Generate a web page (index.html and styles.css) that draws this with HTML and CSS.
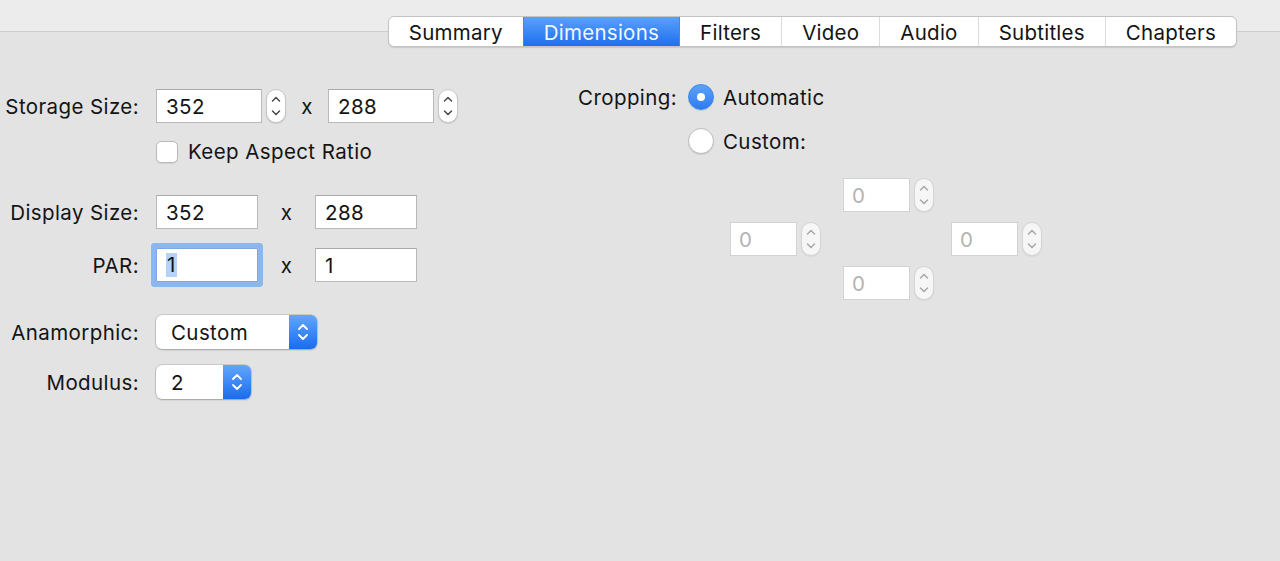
FILE: index.html
```html
<!DOCTYPE html>
<html>
<head>
<meta charset="utf-8">
<link rel="stylesheet" href="styles.css">
</head>
<body>
<div class="window">
  <header class="toolbar">
    <nav class="tabs">
      <div class="tab">Summary</div>
      <div class="tab active">Dimensions</div>
      <div class="tab">Filters</div>
      <div class="tab">Video</div>
      <div class="tab">Audio</div>
      <div class="tab">Subtitles</div>
      <div class="tab">Chapters</div>
    </nav>
  </header>

  <main class="content">
    <section class="left">
      <div class="row row-storage">
        <div class="lbl">Storage Size:</div>
        <div class="ctrls">
          <div class="field w106">352</div>
          <div class="stepper">
            <svg width="20" height="34" viewBox="0 0 20 34"><path d="M6.5 12 L10 8.5 L13.5 12" /><path d="M6.5 22 L10 25.5 L13.5 22" /></svg>
          </div>
          <div class="times t42">x</div>
          <div class="field w106">288</div>
          <div class="stepper">
            <svg width="20" height="34" viewBox="0 0 20 34"><path d="M6.5 12 L10 8.5 L13.5 12" /><path d="M6.5 22 L10 25.5 L13.5 22" /></svg>
          </div>
        </div>
      </div>

      <div class="row row-check">
        <div class="lbl"></div>
        <div class="ctrls">
          <div class="checkbox"></div>
          <span class="check-label">Keep Aspect Ratio</span>
        </div>
      </div>

      <div class="row row-display">
        <div class="lbl">Display Size:</div>
        <div class="ctrls">
          <div class="field w102">352</div>
          <div class="times t57">x</div>
          <div class="field w102">288</div>
        </div>
      </div>

      <div class="row row-par">
        <div class="lbl">PAR:</div>
        <div class="ctrls">
          <div class="field w102 focused"><span class="sel">1</span></div>
          <div class="times t57">x</div>
          <div class="field w102">1</div>
        </div>
      </div>

      <div class="row row-anam">
        <div class="lbl">Anamorphic:</div>
        <div class="ctrls">
          <div class="popup w161">
            <span class="popup-text">Custom</span>
            <span class="popup-btn">
              <svg width="28" height="34" viewBox="0 0 28 34"><path d="M10 14 L14 10 L18 14" /><path d="M10 20 L14 24 L18 20" /></svg>
            </span>
          </div>
        </div>
      </div>

      <div class="row row-mod">
        <div class="lbl">Modulus:</div>
        <div class="ctrls">
          <div class="popup w95">
            <span class="popup-text">2</span>
            <span class="popup-btn">
              <svg width="28" height="34" viewBox="0 0 28 34"><path d="M10 14 L14 10 L18 14" /><path d="M10 20 L14 24 L18 20" /></svg>
            </span>
          </div>
        </div>
      </div>
    </section>

    <section class="right">
      <div class="crop-row">
        <div class="lbl crop-lbl">Cropping:</div>
        <div class="radio on"></div>
        <span class="radio-label">Automatic</span>
      </div>
      <div class="crop-row second">
        <div class="lbl crop-lbl"></div>
        <div class="radio"></div>
        <span class="radio-label">Custom:</span>
      </div>
      <div class="crop-grid">
        <div class="cell c-top">
          <div class="field dis">0</div>
          <div class="stepper dis"><svg width="20" height="34" viewBox="0 0 20 34"><path d="M6.5 12 L10 8.5 L13.5 12" /><path d="M6.5 22 L10 25.5 L13.5 22" /></svg></div>
        </div>
        <div class="cell c-left">
          <div class="field dis">0</div>
          <div class="stepper dis"><svg width="20" height="34" viewBox="0 0 20 34"><path d="M6.5 12 L10 8.5 L13.5 12" /><path d="M6.5 22 L10 25.5 L13.5 22" /></svg></div>
        </div>
        <div class="cell c-right">
          <div class="field dis">0</div>
          <div class="stepper dis"><svg width="20" height="34" viewBox="0 0 20 34"><path d="M6.5 12 L10 8.5 L13.5 12" /><path d="M6.5 22 L10 25.5 L13.5 22" /></svg></div>
        </div>
        <div class="cell c-bottom">
          <div class="field dis">0</div>
          <div class="stepper dis"><svg width="20" height="34" viewBox="0 0 20 34"><path d="M6.5 12 L10 8.5 L13.5 12" /><path d="M6.5 22 L10 25.5 L13.5 22" /></svg></div>
        </div>
      </div>
    </section>
  </main>
</div>
</body>
</html>
```

FILE: styles.css
```css
* { box-sizing: border-box; }

html, body {
  margin: 0;
  padding: 0;
  height: 100%;
}

body {
  background: #e3e3e3;
  font-family: "Inter", "Liberation Sans", sans-serif;
  font-size: 20.5px;
  letter-spacing: 0.4px;
  color: #141414;
  overflow: hidden;
}

.window {
  width: 1280px;
  height: 561px;
}

/* ---------- tab bar ---------- */
.toolbar {
  height: 47px;
  display: flex;
  justify-content: flex-end;
  padding-right: 43px;
  background: linear-gradient(to bottom, #ececec 0, #ececec 31px, #cdcdcd 31px, #cdcdcd 32px, #e3e3e3 32px);
}

.tabs {
  margin-top: 16px;
  height: 31px;
  display: flex;
  background: #ffffff;
  border: 1px solid #c3c3c3;
  border-radius: 6px;
  box-shadow: 0 1px 1px rgba(0, 0, 0, 0.12);
  overflow: hidden;
}

.tab {
  height: 100%;
  display: flex;
  align-items: center;
  justify-content: center;
  padding: 1px 20px 0;
  border-left: 1px solid #dcdcdc;
  color: #141414;
  letter-spacing: 0.25px;
}

.tab:first-child { border-left: none; }

.tab.active {
  background: linear-gradient(to bottom, #5ba1f9, #1c6ff1);
  color: #f2f7ff;
  border-left-color: #3d87f3;
}

.tab.active + .tab { border-left-color: #3d87f3; }

/* ---------- content ---------- */
.content {
  display: flex;
  align-items: flex-start;
}

.left {
  width: 560px;
  padding-top: 42px;
  display: flex;
  flex-direction: column;
}

.row {
  display: flex;
  align-items: center;
}

.row-check   { margin-top: 16px; }
.row-display { margin-top: 31px; }
.row-par     { margin-top: 19px; }
.row-anam    { margin-top: 33px; }
.row-mod     { margin-top: 16px; }

.lbl {
  width: 140px;
  text-align: right;
  padding-right: 1px;
  flex-shrink: 0;
}

.ctrls {
  margin-left: 16px;
  display: flex;
  align-items: center;
}

.field {
  height: 34px;
  background: #ffffff;
  border: 1px solid #b9b9b9;
  border-top-color: #a9a9a9;
  padding-left: 9px;
  display: flex;
  align-items: center;
  color: #141414;
}

.w106 { width: 106px; }
.w102 { width: 102px; }

.field.focused {
  border-color: #7aa8e4;
  box-shadow: 0 0 0 5px #8cb7ec;
  border-radius: 1px;
}

.sel {
  background: #b4d3f8;
  padding: 0 1px;
  line-height: 24px;
}

.stepper {
  margin-left: 4px;
  width: 20px;
  height: 34px;
  background: #ffffff;
  border: 1px solid #c6c6c6;
  border-radius: 10px;
  box-shadow: 0 1px 1px rgba(0, 0, 0, 0.12);
  display: flex;
  align-items: center;
  justify-content: center;
}

.stepper svg {
  display: block;
  margin: -1px;
}

.stepper path {
  fill: none;
  stroke: #4a4a4a;
  stroke-width: 1.5;
  stroke-linecap: round;
  stroke-linejoin: round;
}

.times {
  text-align: center;
}

.t42 { width: 42px; }
.t57 { width: 57px; }

.checkbox {
  width: 22px;
  height: 22px;
  background: #ffffff;
  border: 1px solid #b9b9b9;
  border-radius: 5px;
  box-shadow: 0 1px 1px rgba(0, 0, 0, 0.08);
}

.check-label {
  margin-left: 10px;
}

.popup {
  height: 34px;
  display: flex;
  align-items: stretch;
  background: #ffffff;
  border-radius: 6px;
  box-shadow: 0 0 0 0.5px rgba(0, 0, 0, 0.22), 0 1px 2px rgba(0, 0, 0, 0.2);
  overflow: hidden;
}

.w161 { width: 161px; }
.w95  { width: 95px; }

.popup-text {
  flex: 1;
  padding-left: 15px;
  display: flex;
  align-items: center;
}

.popup-btn {
  width: 28px;
  background: linear-gradient(to bottom, #62a6fa, #1a6cf0);
  display: flex;
  align-items: center;
  justify-content: center;
}

.popup-btn svg { display: block; }

.popup-btn path {
  fill: none;
  stroke: #ffffff;
  stroke-width: 1.8;
  stroke-linecap: round;
  stroke-linejoin: round;
}

/* ---------- cropping ---------- */
.right {
  padding-top: 37px;
  display: flex;
  flex-direction: column;
}

.crop-row {
  display: flex;
  align-items: center;
  height: 26px;
}

.crop-row.second { margin-top: 18px; }

.crop-lbl {
  width: 117px;
  padding-right: 0;
}

.radio {
  margin-left: 11px;
  width: 26px;
  height: 26px;
  border-radius: 50%;
  background: #ffffff;
  border: 1px solid #bdbdbd;
  box-shadow: 0 1px 1px rgba(0, 0, 0, 0.1);
  display: flex;
  align-items: center;
  justify-content: center;
}

.radio.on {
  background: linear-gradient(to bottom, #5ea3f8, #2d7bf1);
  border-color: #3c84ee;
}

.radio.on::after {
  content: "";
  width: 8px;
  height: 8px;
  border-radius: 50%;
  background: #ffffff;
}

.radio-label {
  margin-left: 9px;
}

.crop-grid {
  margin-top: 24px;
  margin-left: 170px;
  display: grid;
  grid-template-columns: 113px 108px 91px;
  grid-template-rows: 34px 34px 34px;
  row-gap: 10px;
}

.cell {
  display: flex;
  align-items: center;
}

.c-top    { grid-column: 2; grid-row: 1; }
.c-left   { grid-column: 1; grid-row: 2; }
.c-right  { grid-column: 3; grid-row: 2; }
.c-bottom { grid-column: 2; grid-row: 3; }

.field.dis {
  width: 67px;
  border-color: #d2d2d2;
  color: #b3b3b3;
  padding-left: 8px;
}

.stepper.dis {
  border-color: #d4d4d4;
  box-shadow: 0 1px 1px rgba(0, 0, 0, 0.06);
  background: #f6f6f6;
}

.stepper.dis path { stroke: #a8a8a8; }
```
